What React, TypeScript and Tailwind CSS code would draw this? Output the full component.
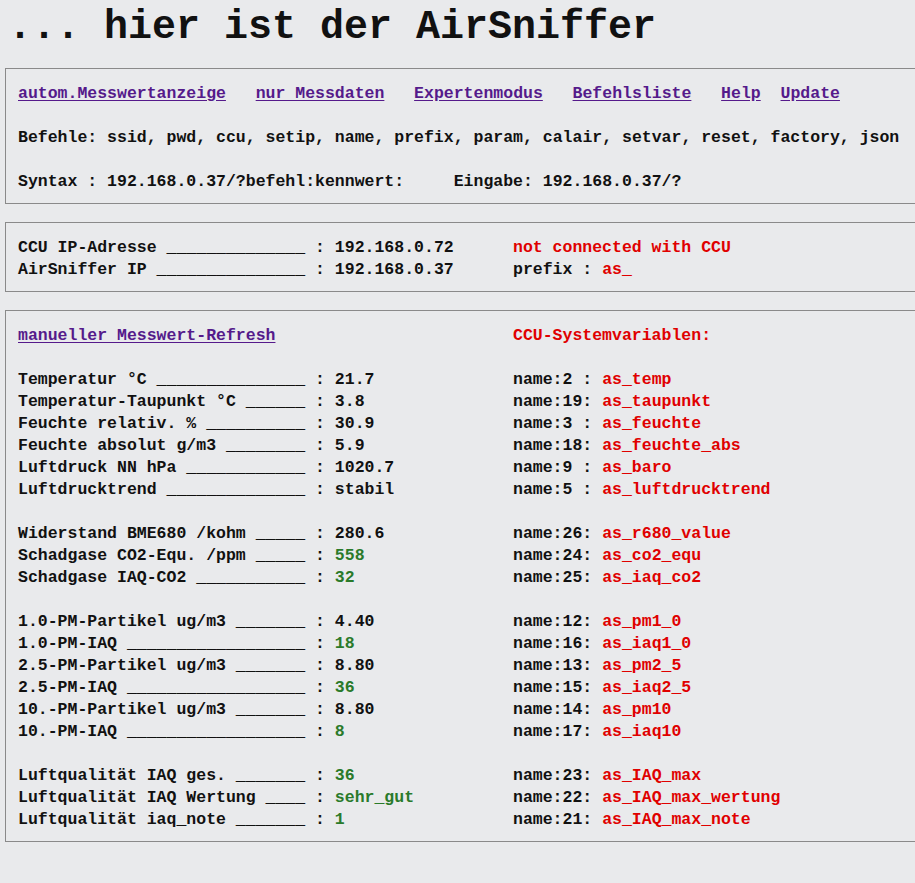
const mono = "font-['Liberation_Mono','DejaVu_Sans_Mono',monospace]";

type Row = { label: string; value: string; green?: boolean; name: string; varName: string };

const groups: Row[][] = [
  [
    { label: "Temperatur °C", value: "21.7", name: "name:2 : ", varName: "as_temp" },
    { label: "Temperatur-Taupunkt °C", value: "3.8", name: "name:19: ", varName: "as_taupunkt" },
    { label: "Feuchte relativ. %", value: "30.9", name: "name:3 : ", varName: "as_feuchte" },
    { label: "Feuchte absolut g/m3", value: "5.9", name: "name:18: ", varName: "as_feuchte_abs" },
    { label: "Luftdruck NN hPa", value: "1020.7", name: "name:9 : ", varName: "as_baro" },
    { label: "Luftdrucktrend", value: "stabil", name: "name:5 : ", varName: "as_luftdrucktrend" },
  ],
  [
    { label: "Widerstand BME680 /kohm", value: "280.6", name: "name:26: ", varName: "as_r680_value" },
    { label: "Schadgase CO2-Equ. /ppm", value: "558", green: true, name: "name:24: ", varName: "as_co2_equ" },
    { label: "Schadgase IAQ-CO2", value: "32", green: true, name: "name:25: ", varName: "as_iaq_co2" },
  ],
  [
    { label: "1.0-PM-Partikel ug/m3", value: "4.40", name: "name:12: ", varName: "as_pm1_0" },
    { label: "1.0-PM-IAQ", value: "18", green: true, name: "name:16: ", varName: "as_iaq1_0" },
    { label: "2.5-PM-Partikel ug/m3", value: "8.80", name: "name:13: ", varName: "as_pm2_5" },
    { label: "2.5-PM-IAQ", value: "36", green: true, name: "name:15: ", varName: "as_iaq2_5" },
    { label: "10.-PM-Partikel ug/m3", value: "8.80", name: "name:14: ", varName: "as_pm10" },
    { label: "10.-PM-IAQ", value: "8", green: true, name: "name:17: ", varName: "as_iaq10" },
  ],
  [
    { label: "Luftqualität IAQ ges.", value: "36", green: true, name: "name:23: ", varName: "as_IAQ_max" },
    { label: "Luftqualität IAQ Wertung", value: "sehr_gut", green: true, name: "name:22: ", varName: "as_IAQ_max_wertung" },
    { label: "Luftqualität iaq_note", value: "1", green: true, name: "name:21: ", varName: "as_IAQ_max_note" },
  ],
];

const fill = (label: string) => `${label} ${"_".repeat(28 - label.length)} : `;

const Line = ({ children }: { children?: React.ReactNode }) => (
  <div className="h-[22px] leading-[22px] whitespace-pre">{children ?? " "}</div>
);

const Box = ({ children }: { children: React.ReactNode }) => (
  <div className="ml-[5px] w-[940px] border border-[#8a8a8a] px-3 pt-[14px] pb-[10px]">{children}</div>
);

const links = ["autom.Messwertanzeige", "nur Messdaten", "Expertenmodus", "Befehlsliste", "Help", "Update"];

export default function App() {
  return (
    <div className={`min-h-screen overflow-hidden bg-[#e9eaec] text-[#111] ${mono}`}>
      <h1 className="pl-[8px] pt-[4px] h-[68px] text-[40px] leading-[48px] font-bold text-[#111] whitespace-pre">
        ... hier ist der AirSniffer
      </h1>

      <div className="text-[16.5px] font-bold flex flex-col gap-[18px]">
        <Box>
          <Line>
            {links.map((l, i) => (
              <span key={l}>
                <a href="#" className="text-[#551a8b] underline underline-offset-2">
                  {l}
                </a>
                {i < links.length - 2 ? "   " : i === links.length - 2 ? "  " : ""}
              </span>
            ))}
          </Line>
          <Line />
          <Line>Befehle: ssid, pwd, ccu, setip, name, prefix, param, calair, setvar, reset, factory, json</Line>
          <Line />
          <Line>Syntax : 192.168.0.37/?befehl:kennwert:     Eingabe: 192.168.0.37/?</Line>
        </Box>

        <Box>
          <div className="flex">
            <div className="w-[495px]">
              <Line>{fill("CCU IP-Adresse")}192.168.0.72</Line>
              <Line>{fill("AirSniffer IP")}192.168.0.37</Line>
            </div>
            <div>
              <Line>
                <span className="text-[#e00000]">not connected with CCU</span>
              </Line>
              <Line>
                prefix : <span className="text-[#e00000]">as_</span>
              </Line>
            </div>
          </div>
        </Box>

        <Box>
          <div className="flex">
            <div className="w-[495px]">
              <Line>
                <a href="#" className="text-[#551a8b] underline underline-offset-2">
                  manueller Messwert-Refresh
                </a>
              </Line>
            </div>
            <Line>
              <span className="text-[#e00000]">CCU-Systemvariablen:</span>
            </Line>
          </div>
          {groups.map((g, gi) => (
            <div key={gi}>
              <Line />
              {g.map((r) => (
                <div key={r.label} className="flex">
                  <div className="w-[495px]">
                    <Line>
                      {fill(r.label)}
                      <span className={r.green ? "text-[#2a7a2a]" : ""}>{r.value}</span>
                    </Line>
                  </div>
                  <Line>
                    {r.name}
                    <span className="text-[#e00000]">{r.varName}</span>
                  </Line>
                </div>
              ))}
            </div>
          ))}
        </Box>
      </div>
    </div>
  );
}
